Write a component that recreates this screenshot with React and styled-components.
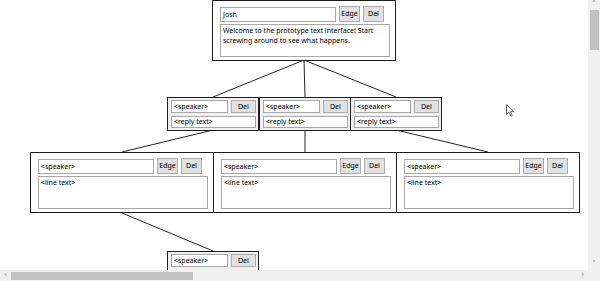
import React from "react";
import styled, { createGlobalStyle } from "styled-components";

const GlobalStyle = createGlobalStyle`
  html, body {
    margin: 0;
    padding: 0;
    background: #ffffff;
  }
  body {
    font-family: "Noto Sans", "Open Sans", sans-serif;
  }
`;

const Window = styled.div`
  width: 600px;
  height: 281px;
  display: grid;
  grid-template-columns: 1fr 12px;
  grid-template-rows: 1fr 11px;
  overflow: hidden;
  background: #fff;
`;

const Canvas = styled.div`
  position: relative;
  overflow: hidden;
  background: #fff;
`;

const EdgeLayer = styled.svg`
  position: absolute;
  left: 0;
  top: 0;
  width: 588px;
  height: 270px;
  pointer-events: none;
`;

const Node = styled.div`
  position: absolute;
  box-sizing: border-box;
  display: flex;
  flex-direction: column;
  background: #fff;
  border: 1px solid #1c1c1c;
`;

const LineNode = styled(Node)`
  width: 184px;
  height: 61px;
  padding: 5px 5px 2px 7px;
  gap: 2px;
`;

const ReplyNode = styled(Node)`
  width: 92px;
  height: 34px;
  padding: 2px 2px 2px 3px;
  gap: 3px;
  background: #f0f0f0;
`;

const HeaderRow = styled.div`
  display: flex;
  align-items: center;
  gap: ${(p) => p.gap || 3}px;
`;

const TextBox = styled.div`
  box-sizing: border-box;
  width: ${(p) => (p.w ? p.w + "px" : "100%")};
  height: ${(p) => p.h}px;
  border: 1px solid #a8a8a8;
  background: #fff;
  font-size: 7px;
  line-height: ${(p) => p.h - 2}px;
  padding: 0 2px;
  color: #000;
  white-space: nowrap;
  overflow: hidden;
`;

const TextArea = styled.div`
  box-sizing: border-box;
  width: 100%;
  height: 33px;
  border: 1px solid #a8a8a8;
  background: #fff;
  font-size: 7px;
  line-height: 10px;
  padding: 1px 2px;
  color: #000;
  overflow: hidden;
`;

const Button = styled.div`
  box-sizing: border-box;
  width: ${(p) => p.w}px;
  height: ${(p) => p.h}px;
  border: 1px solid #adadad;
  background: #e1e1e1;
  font-size: 7px;
  line-height: ${(p) => p.h - 2}px;
  text-align: center;
  color: #000;
`;

const Cursor = styled.svg`
  position: absolute;
  left: 506px;
  top: 104px;
`;

const VScroll = styled.div`
  background: #f0f0f0;
  display: flex;
  flex-direction: column;
  align-items: center;
`;

const HScroll = styled.div`
  background: #f0f0f0;
  display: flex;
  align-items: center;
`;

const Corner = styled.div`
  background: #f0f0f0;
`;

const Arrow = styled.div`
  color: #8a8a8a;
  font-family: "DejaVu Sans", sans-serif;
  font-size: 8px;
  line-height: 10px;
  width: ${(p) => (p.vertical ? "12px" : "11px")};
  height: ${(p) => (p.vertical ? "10px" : "11px")};
  text-align: center;
`;

const Track = styled.div`
  flex: 1;
  display: flex;
  flex-direction: ${(p) => (p.vertical ? "column" : "row")};
  align-items: center;
`;

const Thumb = styled.div`
  background: #c2c2c2;
  width: ${(p) => (p.vertical ? "9px" : p.len + "px")};
  height: ${(p) => (p.vertical ? p.len + "px" : "8px")};
`;

const Spacer = styled.div`
  flex: 1;
`;

function LinePanel({ x, y, speaker, text, showEdge = true }) {
  return (
    <LineNode style={{ left: x, top: y }}>
      <HeaderRow>
        <TextBox w={116} h={15}>{speaker}</TextBox>
        {showEdge && <Button w={21} h={16}>Edge</Button>}
        <Button w={21} h={16}>Del</Button>
      </HeaderRow>
      <TextArea>{text}</TextArea>
    </LineNode>
  );
}

function ReplyPanel({ x, y }) {
  return (
    <ReplyNode style={{ left: x, top: y }}>
      <HeaderRow gap={3}>
        <TextBox w={58} h={13}>&lt;speaker&gt;</TextBox>
        <Button w={26} h={13}>Del</Button>
      </HeaderRow>
      <TextBox h={12}>&lt;reply text&gt;</TextBox>
    </ReplyNode>
  );
}

const edges = [
  [304, 60, 213, 97],
  [304, 60, 305, 97],
  [304, 60, 396, 97],
  [213, 130, 122, 152],
  [305, 130, 305, 152],
  [396, 130, 488, 152],
  [122, 213, 213, 251],
];

export default function App() {
  return (
    <>
      <GlobalStyle />
      <Window>
        <Canvas>
          <EdgeLayer viewBox="0 0 588 270">
            {edges.map(([x1, y1, x2, y2], i) => (
              <line key={i} x1={x1} y1={y1} x2={x2} y2={y2} stroke="#222" strokeWidth="1" />
            ))}
          </EdgeLayer>
          <LinePanel
            x={212}
            y={0}
            speaker="Josh"
            text="Welcome to the prototype text interface! Start screwing around to see what happens."
          />
          <ReplyPanel x={167} y={97} />
          <ReplyPanel x={259} y={97} />
          <ReplyPanel x={350} y={97} />
          <LinePanel x={30} y={152} speaker="<speaker>" text="<line text>" />
          <LinePanel x={213} y={152} speaker="<speaker>" text="<line text>" />
          <LinePanel x={396} y={152} speaker="<speaker>" text="<line text>" />
          <ReplyPanel x={167} y={251} />
          <Cursor width="9" height="13" viewBox="0 0 9 13">
            <path d="M0.5 0.5 L0.5 10.5 L3 8.2 L4.8 12.2 L6.2 11.6 L4.5 7.7 L7.8 7.7 Z" fill="#fff" stroke="#555" strokeWidth="0.9" />
          </Cursor>
        </Canvas>
        <VScroll>
          <Arrow vertical>&#x2C4;</Arrow>
          <Track vertical>
            <Thumb vertical len={40} />
            <Spacer />
          </Track>
          <Arrow vertical>&#x2C5;</Arrow>
        </VScroll>
        <HScroll>
          <Arrow>&#x2039;</Arrow>
          <Track>
            <Thumb len={182} />
            <Spacer />
          </Track>
          <Arrow>&#x203A;</Arrow>
        </HScroll>
        <Corner />
      </Window>
    </>
  );
}
